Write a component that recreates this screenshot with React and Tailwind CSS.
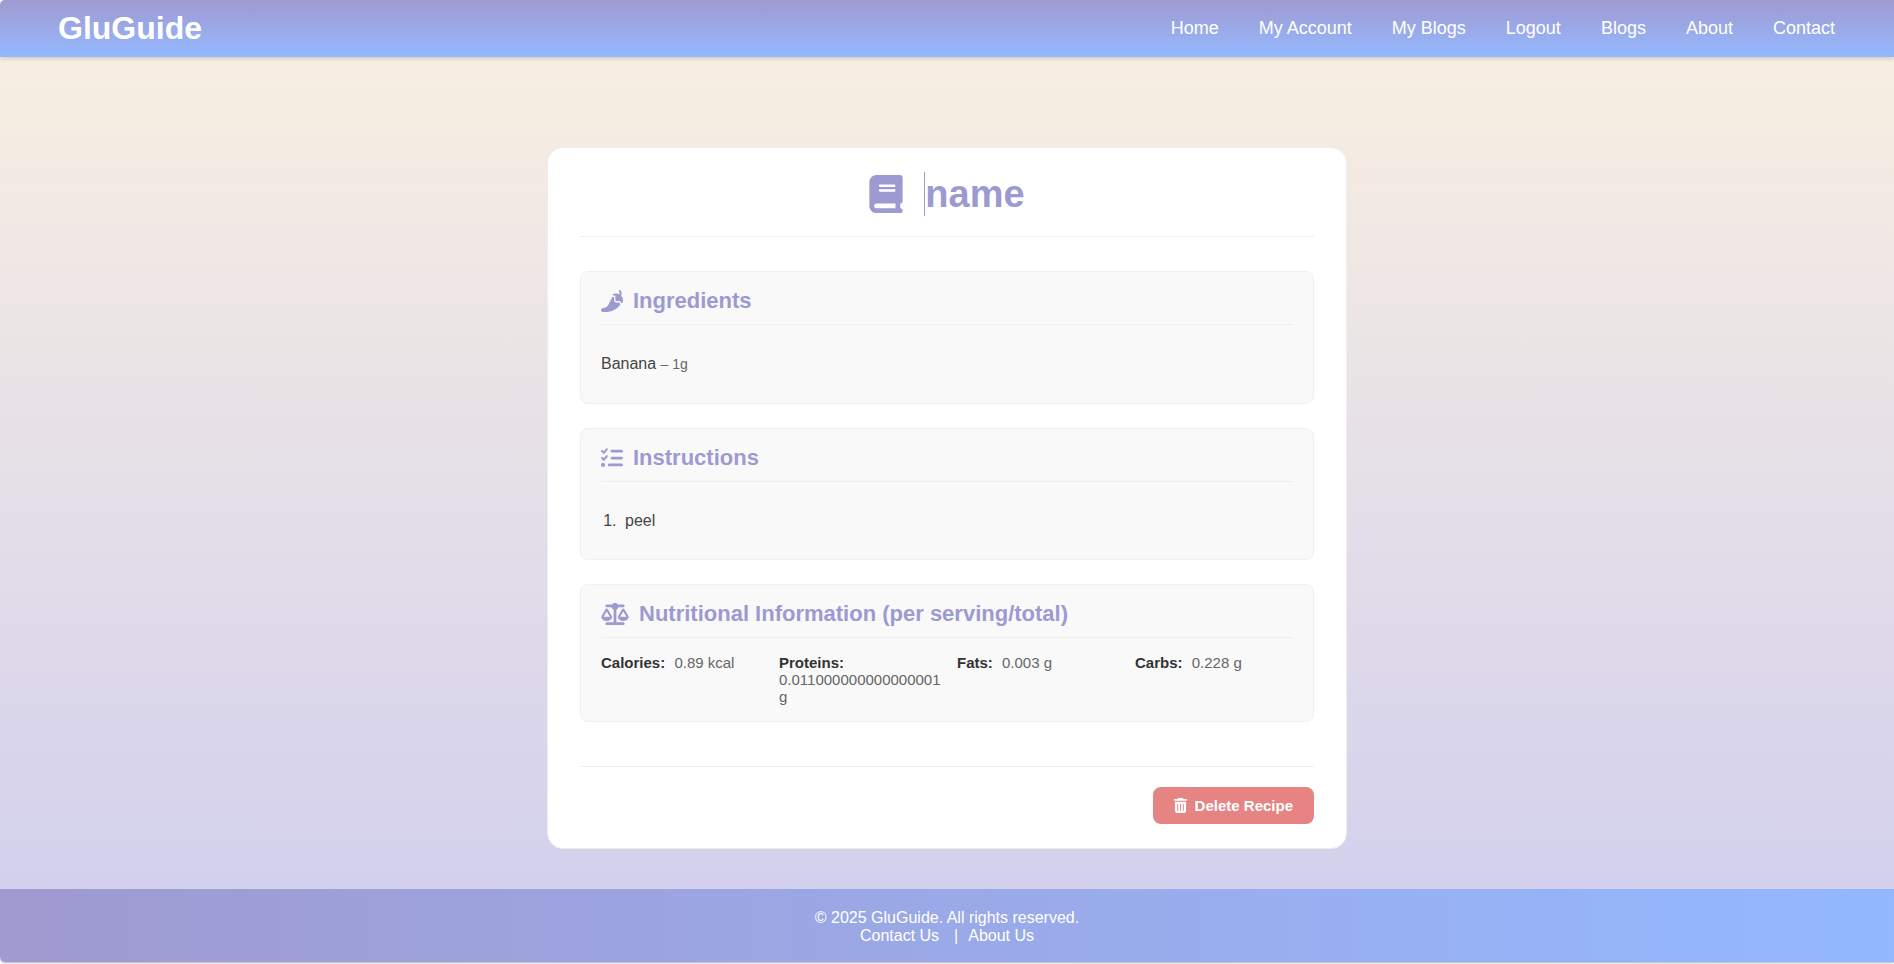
import { FaBook, FaListCheck, FaPepperHot } from "react-icons/fa6";

const navLinks = ["Home", "My Account", "My Blogs", "Logout", "Blogs", "About", "Contact"];

const nutrition = [
  ["Calories:", "0.89 kcal"],
  ["Proteins:", "0.011000000000000001 g"],
  ["Fats:", "0.003 g"],
  ["Carbs:", "0.228 g"],
];

function ScaleIcon({ className }) {
  return (
    <svg viewBox="0 0 640 512" fill="currentColor" className={className} aria-hidden="true">
      <path d="M384 32H512c17.7 0 32 14.3 32 32s-14.3 32-32 32H398.4c-5.2 25.8-22.9 47.1-46.4 57.3V448H512c17.7 0 32 14.3 32 32s-14.3 32-32 32H320 128c-17.7 0-32-14.3-32-32s14.3-32 32-32H288V153.3c-23.5-10.3-41.2-31.6-46.4-57.3H128c-17.7 0-32-14.3-32-32s14.3-32 32-32H256c14.6-19.4 37.8-32 64-32s49.4 12.6 64 32zm55.6 288H584.4L512 195.8 439.6 320zM512 416c-62.9 0-115.2-34-126-78.9c-2.6-11 1-22.3 6.7-32.1l95.2-163.2c5-8.6 14.2-13.8 24.1-13.8s19.1 5.3 24.1 13.8l95.2 163.2c5.7 9.8 9.3 21.1 6.7 32.1C627.2 382 574.9 416 512 416zM126.8 195.8L54.4 320H199.3L126.8 195.8zM.9 337.1c-2.6-11 1-22.3 6.7-32.1l95.2-163.2c5-8.6 14.2-13.8 24.1-13.8s19.1 5.3 24.1 13.8l95.2 163.2c5.7 9.8 9.3 21.1 6.7 32.1C242 382 189.7 416 126.8 416S11.7 382 .9 337.1z" />
    </svg>
  );
}

function TrashIcon({ className }) {
  return (
    <svg viewBox="0 0 448 512" fill="currentColor" className={className} aria-hidden="true">
      <path
        fillRule="evenodd"
        d="M135.2 17.7C140.6 6.8 151.7 0 163.8 0H284.2c12.1 0 23.2 6.8 28.6 17.7L320 32h96c17.7 0 32 14.3 32 32s-14.3 32-32 32H32C14.3 96 0 81.7 0 64S14.3 32 32 32h96l7.2-14.3zM32 128H416V448c0 35.3-28.7 64-64 64H96c-35.3 0-64-28.7-64-64V128zm96 64c-8.8 0-16 7.2-16 16V432c0 8.8 7.2 16 16 16s16-7.2 16-16V208c0-8.8-7.2-16-16-16zm96 0c-8.8 0-16 7.2-16 16V432c0 8.8 7.2 16 16 16s16-7.2 16-16V208c0-8.8-7.2-16-16-16zm96 0c-8.8 0-16 7.2-16 16V432c0 8.8 7.2 16 16 16s16-7.2 16-16V208c0-8.8-7.2-16-16-16z"
      />
    </svg>
  );
}

function Section({ icon, title, children }) {
  return (
    <section className="rounded-lg border border-[#f0f0f0] bg-[#f9f9f9] px-5 py-4">
      <h2 className="flex items-center gap-2.5 border-b border-[#eeeeee] pb-2.5 text-[22px] leading-[26px] font-bold text-[#9d9ad1]">
        {icon}
        {title}
      </h2>
      {children}
    </section>
  );
}

export default function App() {
  return (
    <div className="bg-white pb-0.5 font-['Liberation_Sans',Arial,sans-serif]">
      <div className="flex min-h-[calc(100vh-2px)] flex-col overflow-hidden rounded-l-[5px] shadow-[0_1px_2px_rgba(0,0,0,0.3)]">
        <header className="z-10 flex h-[57px] items-center justify-between bg-linear-to-b from-[#9f9ad0] to-[#93b8ff] pr-[59px] pb-0.5 pl-[58px] text-white shadow-[0_2px_4px_rgba(0,0,0,0.15)]">
          <a href="#home" className="text-[32px] leading-9 font-bold">GluGuide</a>
          <nav className="flex gap-10 text-lg">
            {navLinks.map((label) => (
              <a key={label} href={"#" + label.toLowerCase().replace(" ", "-")}>{label}</a>
            ))}
          </nav>
        </header>

        <main className="flex grow flex-col bg-linear-to-b from-[#f8efe1] to-[#d3d0ed] px-4 pt-[90px] pb-10">
          <article className="mx-auto w-full max-w-[800px] rounded-2xl border border-[#eeeeee] bg-white px-8 py-6">
            <h1 className="flex items-center justify-center border-b border-[#eeeeee] pr-0.5 pb-5 text-[38px] leading-[44px] font-bold text-[#9d9ad1]">
              <FaBook className="mr-[19px] h-[38px] w-auto" aria-hidden="true" />
              <span className="border-l border-[#9d9ad1]">name</span>
            </h1>

            <div className="mt-[34px] flex flex-col gap-6">
              <Section icon={<FaPepperHot className="size-[22px]" aria-hidden="true" />} title="Ingredients">
                <ul className="pt-[27px] pb-[11px] text-base text-[#444444]">
                  <li>
                    Banana <span className="text-sm text-[#666666]">– 1g</span>
                  </li>
                </ul>
              </Section>

              <Section icon={<FaListCheck className="size-[22px]" aria-hidden="true" />} title="Instructions">
                <ol className="list-decimal pt-[27px] pb-2.5 pl-5 text-base text-[#444444]">
                  <li className="pl-1">peel</li>
                </ol>
              </Section>

              <Section icon={<ScaleIcon className="h-[22px] w-7" />} title="Nutritional Information (per serving/total)">
                <dl className="grid grid-cols-4 gap-5 pt-4 text-[15px] leading-[17px]">
                  {nutrition.map(([label, value]) => (
                    <div key={label}>
                      <dt className="mr-[5px] inline font-bold text-[#333333]">{label}</dt>{" "}
                      <dd className="inline text-[#666666]">{value}</dd>
                    </div>
                  ))}
                </dl>
              </Section>
            </div>

            <div className="mt-11 flex justify-end border-t border-[#eeeeee] pt-5">
              <button type="button" className="flex items-center gap-2 rounded-lg bg-[#e68383] px-[21px] py-2.5 text-[15px] leading-[17px] font-bold text-white">
                <TrashIcon className="h-[15px] w-[13px]" />
                Delete Recipe
              </button>
            </div>
          </article>
        </main>

        <footer className="bg-linear-to-r from-[#9f9ad0] to-[#93b8ff] pt-5 pb-[17px] text-center text-base leading-[18px] text-white">
          <p>© 2025 GluGuide. All rights reserved.</p>
          <p className="flex justify-center">
            <a href="#contact">Contact Us</a>
            <span className="mr-2.5 ml-[15px]">|</span>
            <a href="#about">About Us</a>
          </p>
        </footer>
      </div>
    </div>
  );
}
